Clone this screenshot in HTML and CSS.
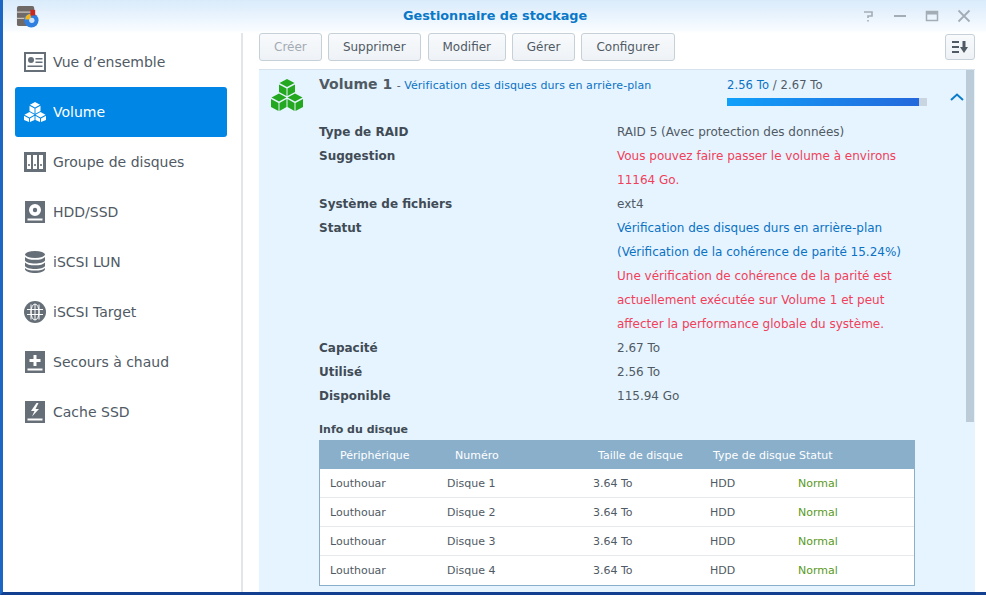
FILE: index.html
```html
<!DOCTYPE html>
<html lang="fr">
<head>
<meta charset="utf-8">
<title>Gestionnaire de stockage</title>
<link rel="stylesheet" href="styles.css">
</head>
<body>
<div class="window">
  <header class="titlebar">
    <svg class="app-icon" viewBox="0 0 24 24" width="23" height="23">
      <rect x="1" y="1" width="18" height="21" rx="2" fill="#6f6a68"/>
      <path d="M1 7.500h18M1 14h18" stroke="#c9c4bd" stroke-width="1.200"/>
      <circle cx="16" cy="16" r="7.500" fill="#2f7fe0"/>
      <path d="M9.500 15a6 6 0 0 1 6-6v6z" fill="#f3b51e"/>
      <path d="M15 5h5v6h-5z" fill="#c9281e"/>
      <circle cx="16.500" cy="16" r="2.800" fill="#cfe2f7"/>
    </svg>
    <h1 class="title">Gestionnaire de stockage</h1>
    <div class="winctl">
      <svg viewBox="0 0 14 14" width="14" height="14"><path d="M3 3h8v4H7v2M7 11v1.500" fill="none" stroke="#a3adb6" stroke-width="1.600"/></svg>
      <svg viewBox="0 0 14 14" width="14" height="14"><path d="M1 7h12" stroke="#a3adb6" stroke-width="2"/></svg>
      <svg viewBox="0 0 14 14" width="14" height="14"><path d="M1.500 2.500h11v9h-11z" fill="none" stroke="#a3adb6" stroke-width="1.500"/><path d="M1 3h12v2.500H1z" fill="#a3adb6"/></svg>
      <svg viewBox="0 0 14 14" width="14" height="14"><path d="M1.500 1.500l11 11M12.500 1.500l-11 11" stroke="#a3adb6" stroke-width="1.800"/></svg>
    </div>
  </header>
  <div class="body">
    <nav class="sidebar">
      <a class="nav-item">
        <svg class="nav-icon" viewBox="0 0 22 20"><path fill-rule="evenodd" d="M0 0h22v20H0zM2 2v16h18V2z"/><circle cx="7" cy="8" r="3"/><path d="M3.500 15h15v-1.500h-15zM11.500 6h7v1.500h-7zM11.500 9.500h7v1.500h-7z"/></svg>
        Vue d’ensemble
      </a>
      <a class="nav-item active">
        <svg class="nav-icon" viewBox="0 0 24 24"><path d="M12 1l5.500 3L12 7 6.500 4zM6 5.200l5.500 3v5.600L6 10.800zM18 5.200v5.600l-5.500 3V8.200zM6 12l5.500 3L6 18 .500 15zM18 12l5.500 3L18 18l-5.500-3zM0 16.200l5.500 3V23L0 20.800zM11.500 16.200v4.600L6.500 23v-3.800zM12.500 16.200l5 3V23l-5-2.200zM24 16.200v4.600L18.500 23v-3.800z"/></svg>
        Volume
      </a>
      <a class="nav-item">
        <svg class="nav-icon" viewBox="0 0 22 20"><path fill-rule="evenodd" d="M0 0h22v20H0zM3 3v14h4V3zM9 3v14h4V3zM15 3v14h4V3z"/><path d="M4.200 12h1.600v2H4.200zM10.200 12h1.600v2h-1.600zM16.200 12h1.600v2h-1.600z"/></svg>
        Groupe de disques
      </a>
      <a class="nav-item">
        <svg class="nav-icon" viewBox="0 0 22 22"><path fill-rule="evenodd" d="M1 0h20v22H1zM11 3a6 6 0 1 0 0 12 6 6 0 0 0 0-12zM3.500 17.500v2h15v-2z"/><circle cx="11" cy="9" r="2.200"/></svg>
        HDD/SSD
      </a>
      <a class="nav-item">
        <svg class="nav-icon" viewBox="0 0 22 22"><ellipse cx="11" cy="3.500" rx="10" ry="3.500"/><path d="M1 6c2 2 5 2.800 10 2.800S19 8 21 6v3.500c-1 2-5 3-10 3S2 11.500 1 9.500zM1 11.500c2 2 5 2.800 10 2.800s8-.8 10-2.800V15c-1 2-5 3-10 3S2 17 1 15zM1 17c2 2 5 2.500 10 2.500S19 19 21 17v1.500c-1 2-5 3.500-10 3.500S2 20.500 1 18.500z"/></svg>
        iSCSI LUN
      </a>
      <a class="nav-item">
        <svg class="nav-icon" viewBox="0 0 22 22"><circle cx="11" cy="11" r="11"/><g fill="none" stroke="#fff" stroke-width="1"><ellipse cx="11" cy="11" rx="4" ry="8"/><path d="M11 3v16M3 8.500h16M3 13.500h16M7 3.500v15M15 3.500v15"/></g></svg>
        iSCSI Target
      </a>
      <a class="nav-item">
        <svg class="nav-icon" viewBox="0 0 22 22"><path fill-rule="evenodd" d="M1 0h20v22H1zM9.500 4v4h-4v3h4v4h3v-4h4V8h-4V4zM3.500 17.500v2h15v-2z"/></svg>
        Secours à chaud
      </a>
      <a class="nav-item">
        <svg class="nav-icon" viewBox="0 0 22 22"><path fill-rule="evenodd" d="M1 0h20v22H1zM12.500 2L7 10h3.500L8 15.500 15 8h-3.500l3-6zM3.500 17.500v2h15v-2z"/></svg>
        Cache SSD
      </a>
    </nav>
    <main class="content">
      <div class="toolbar">
        <button class="btn" disabled>Créer</button>
        <button class="btn btn-delete">Supprimer</button>
        <button class="btn btn-edit">Modifier</button>
        <button class="btn">Gérer</button>
        <button class="btn">Configurer</button>
        <button class="btn sort" aria-label="Trier">
          <svg viewBox="0 0 16 12" width="16" height="12"><path d="M0 0h7v2H0zM0 5h7v2H0zM0 10h7v2H0z" fill="#505a64"/><path d="M10.500 0h3v6H16l-4 6-4-6h2.500z" fill="#505a64"/></svg>
        </button>
      </div>
      <section class="panel">
        <div class="scrollbar"></div>
        <div class="panel-head">
          <svg class="vol-icon" viewBox="0 0 32 32" width="32" height="32"><path fill="#24a820" d="M16 0l7.500 4L16 8 8.500 4zM8 5.500l7.500 4v7.500L8 13zM24 5.500V13l-7.500 4V9.500zM8 14.500l7.500 4L8 22.500 .5 18.500zM24 14.500l7.500 4-7.500 4-7.500-4zM0 20l7.500 4v8L0 28zM15.500 20v8l-7 4v-8zM16.500 20l7 4v8l-7-4zM32 20v8l-7.500 4v-8z"/></svg>
          <div class="vol-title"><strong>Volume 1</strong> <span class="dash">-</span> <span class="blue">Vérification des disques durs en arrière-plan</span></div>
          <div class="usage">
            <div class="usage-text"><span class="blue">2.56 To</span> / 2.67 To</div>
            <div class="bar"><div class="bar-fill"></div></div>
          </div>
          <svg class="chevron" viewBox="0 0 14 8" width="14" height="8"><path d="M1 7l6-5.500L13 7" fill="none" stroke="#0b7dc9" stroke-width="2"/></svg>
        </div>
        <dl class="info">
          <dt>Type de RAID</dt><dd>RAID 5 (Avec protection des données)</dd>
          <dt>Suggestion</dt><dd class="red">Vous pouvez faire passer le volume à environs<br>11164 Go.</dd>
          <dt>Système de fichiers</dt><dd>ext4</dd>
          <dt>Statut</dt><dd><span class="blue">Vérification des disques durs en arrière-plan</span><br><span class="blue">(Vérification de la cohérence de parité 15.24%)</span><br><span class="red">Une vérification de cohérence de la parité est<br>actuellement exécutée sur Volume 1 et peut<br>affecter la performance globale du système.</span></dd>
          <dt>Capacité</dt><dd>2.67 To</dd>
          <dt>Utilisé</dt><dd>2.56 To</dd>
          <dt>Disponible</dt><dd>115.94 Go</dd>
        </dl>
        <h2 class="disk-title">Info du disque</h2>
        <table class="disks">
          <colgroup><col class="c1"><col class="c2"><col class="c3"><col class="c4"><col></colgroup>
          <thead><tr><th class="h1">Périphérique</th><th class="h2">Numéro</th><th class="h3">Taille de disque</th><th class="h4">Type de disque</th><th class="h5">Statut</th></tr></thead>
          <tbody>
            <tr><td>Louthouar</td><td>Disque 1</td><td>3.64 To</td><td>HDD</td><td class="ok">Normal</td></tr>
            <tr><td>Louthouar</td><td>Disque 2</td><td>3.64 To</td><td>HDD</td><td class="ok">Normal</td></tr>
            <tr><td>Louthouar</td><td>Disque 3</td><td>3.64 To</td><td>HDD</td><td class="ok">Normal</td></tr>
            <tr><td>Louthouar</td><td>Disque 4</td><td>3.64 To</td><td>HDD</td><td class="ok">Normal</td></tr>
          </tbody>
        </table>
      </section>
    </main>
  </div>
</div>
</body>
</html>
```
FILE: styles.css
```css
* { box-sizing: border-box; }
html, body { margin: 0; height: 100%; overflow: hidden; }
body { font-family: "DejaVu Sans", Verdana, sans-serif; font-size: 11px; color: #505a64; background: #fff; }
.window { height: 595px; border-left: 3px solid #1c66c4; border-bottom: 3px solid #123f8f; display: flex; flex-direction: column; background: #fff; }
.titlebar { height: 33px; flex: none; display: flex; align-items: center; padding: 0 6px 1px 13px; position: relative; background: linear-gradient(#d9ebfb, #f7fbff 90%, #fff); }
.app-icon { flex: none; }
.title { position: absolute; left: 400px; top: 8px; margin: 0; font-size: 12.8px; font-weight: bold; color: #0a78c8; line-height: 16px; }
.winctl { margin-left: auto; display: flex; gap: 18px; padding-right: 9px; }
.body { flex: 1; display: flex; min-height: 0; }
.sidebar { width: 240px; flex: none; border-right: 2px solid #e3e6e9; padding: 4px 14px 0 12px; }
.nav-item { height: 50px; display: flex; align-items: center; gap: 7px; padding-left: 9px; font-size: 14px; color: #505a64; border-radius: 3px; }
.nav-item.active { background: #0086e5; color: #fff; }
.nav-icon { width: 22px; height: 22px; flex: none; fill: #666f78; }
.active .nav-icon { fill: #fff; }
.content { flex: 1; min-width: 0; padding: 0 11px 0 16px; display: flex; flex-direction: column; }
.toolbar { height: 36px; flex: none; display: flex; gap: 6px; }
.btn { height: 28px; padding: 0 14px; font: 12px "DejaVu Sans", Verdana, sans-serif; color: #505a64; border: 1px solid #c6d0d9; border-radius: 3px; background: linear-gradient(#f8fafc, #eef2f6); }
.btn:disabled { color: #a3abb3; }
.btn-delete { width: 93px; padding: 0; }
.btn-edit { width: 78px; padding: 0; margin-left: 1px; }
.sort { margin-left: auto; margin-top: 1px; width: 30px; height: 26px; padding: 0; display: flex; align-items: center; justify-content: center; }
.panel { flex: 1; position: relative; overflow: hidden; background: #e6f4ff; border-top: 1px solid #d7e3ec; padding: 0 60px 0 60px; }
.scrollbar { position: absolute; right: 1px; top: 0; width: 8px; height: 352px; background: #bccbd8; }
.panel-head { height: 50px; position: relative; }
.vol-icon { position: absolute; left: -48px; top: 9px; }
.vol-title { padding-top: 5px; line-height: 18px; }
.vol-title strong { font-size: 14px; color: #505a64; }
.vol-title .blue { letter-spacing: .09px; }
.dash { margin-left: 1px; }
.blue { color: #0b72c4; }
.red { color: #f0405a; }
.usage { position: absolute; left: 408px; top: 8px; width: 200px; }
.usage-text { line-height: 14px; font-size: 11.5px; letter-spacing: .1px; }
.bar { height: 8px; margin-top: 6px; background: #c9d6e1; }
.bar-fill { width: 96%; height: 100%; background: linear-gradient(90deg, #10a0fa, #2468dc); }
.chevron { position: absolute; left: 631px; top: 23px; }
.info { margin: 0; display: grid; grid-template-columns: 298px 1fr; font-size: 12px; line-height: 24px; }
.info dt { font-weight: bold; color: #414b55; }
.info dd { margin: 0; }
.disk-title { margin: 14px 0 0; height: 18px; font-size: 11px; line-height: 15px; font-weight: bold; color: #414b55; }
.disks { width: 596px; border-collapse: separate; border-spacing: 0; table-layout: fixed; background: #fff; border: 1px solid #8aafcb; }
.c1 { width: 127px; } .c2 { width: 146px; } .c3 { width: 117px; } .c4 { width: 88px; }
.disks th { height: 28px; padding: 0; background: #8aafcb; color: #fff; font-weight: normal; text-align: left; white-space: nowrap; }
.h1 { padding-left: 20px !important; } .h2 { padding-left: 8px !important; } .h3 { padding-left: 5px !important; } .h4 { padding-left: 3px !important; } .h5 { padding-left: 1px !important; }
.disks td { height: 29px; padding: 0 0 0 10px; border-bottom: 1px solid #e6eaed; }
.disks td:not(:first-child) { padding-left: 0; }
.disks tr:last-child td { border-bottom: 0; }
.ok { color: #5a9a1e; }
```
